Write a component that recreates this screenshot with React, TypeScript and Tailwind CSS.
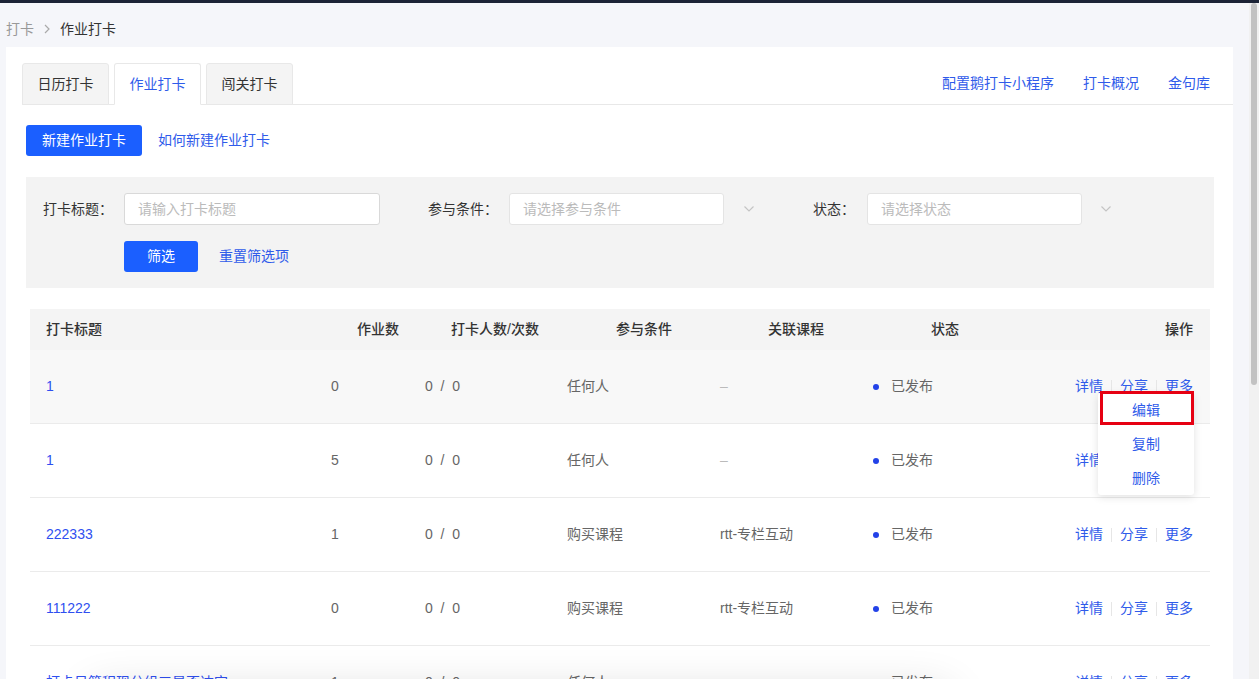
import React from "react";

const FONT = { fontFamily: '"Liberation Sans","Noto Sans CJK SC",sans-serif' };

const Chevron = ({ className = "" }: { className?: string }) => (
  <svg width="12" height="8" viewBox="0 0 12 8" className={className} fill="none">
    <path d="M1.5 1.5 L6 6 L10.5 1.5" stroke="#c4c4c4" strokeWidth="1.2" />
  </svg>
);

type Row = {
  title: string;
  n: string;
  course: string;
  cond: string;
  hover?: boolean;
  hideActions?: boolean;
};

const rows: Row[] = [
  { title: "1", n: "0", cond: "任何人", course: "–", hover: true },
  { title: "1", n: "5", cond: "任何人", course: "–", hideActions: true },
  { title: "222333", n: "1", cond: "购买课程", course: "rtt-专栏互动" },
  { title: "111222", n: "0", cond: "购买课程", course: "rtt-专栏互动" },
  { title: "打卡日简程现分组三是否达定", n: "1", cond: "任何人", course: "" },
];

function Actions({ partial }: { partial?: boolean }) {
  return (
    <div className="flex items-center justify-end pr-[17px] text-[#2f5bea]">
      <span>详情</span>
      <span className="mx-[8px] h-[14px] w-px bg-[#e6e6e6]" />
      <span className={partial ? "invisible" : ""}>分享</span>
      <span className="mx-[8px] h-[14px] w-px bg-[#e6e6e6]" />
      <span className={partial ? "invisible" : ""}>更多</span>
    </div>
  );
}

export default function App() {
  return (
    <div
      className="relative h-[679px] w-[1259px] overflow-hidden bg-[#f5f6fa] text-[14px] text-[#333]"
      style={FONT}
    >
      <div className="h-[3px] bg-[#1c2336]" />
      <div className="flex">
        <div className="w-[1249px]">
          {/* breadcrumb */}
          <div className="flex h-[44px] items-center pl-[6px] pt-[8px]">
            <span className="text-[#999]">打卡</span>
            <svg width="8" height="10" viewBox="0 0 8 10" className="mx-[9px]" fill="none">
              <path d="M2 1 L6 5 L2 9" stroke="#aaa" strokeWidth="1.2" />
            </svg>
            <span className="text-[#333]">作业打卡</span>
          </div>

          {/* card */}
          <div className="ml-[6px] mr-[16px] h-[700px] bg-white pt-[16px]">
            {/* tabs */}
            <div className="ml-[16px] flex h-[42px] items-end border-b border-[#e8e8e8]">
              <div className="mb-[-1px] flex h-[42px] w-[87px] items-center justify-center rounded-t-[3px] border border-[#e8e8e8] bg-[#f4f4f4] text-[#333]">
                日历打卡
              </div>
              <div className="mb-[-1px] ml-[5px] flex h-[42px] w-[87px] items-center justify-center rounded-t-[3px] border border-[#e8e8e8] border-b-white bg-white text-[#2f5bea]">
                作业打卡
              </div>
              <div className="mb-[-1px] ml-[5px] flex h-[42px] w-[87px] items-center justify-center rounded-t-[3px] border border-[#e8e8e8] bg-[#f4f4f4] text-[#333]">
                闯关打卡
              </div>
              <div className="ml-auto flex h-[41px] items-center gap-[29px] pr-[23px] text-[#2f5bea]">
                <span>配置鹅打卡小程序</span>
                <span>打卡概况</span>
                <span>金句库</span>
              </div>
            </div>

            {/* action buttons */}
            <div className="ml-[20px] mt-[20px] flex items-center">
              <button className="h-[31px] w-[116px] rounded-[3px] bg-[#1b5fff] text-white">新建作业打卡</button>
              <span className="ml-[16px] text-[#2f5bea]">如何新建作业打卡</span>
            </div>

            {/* filter panel */}
            <div className="ml-[20px] mt-[21px] h-[111px] w-[1188px] bg-[#f3f3f3] pl-[17px] pt-[16px]">
              <div className="flex h-[32px] items-center">
                <span className="w-[81px] text-[#333]">打卡标题：</span>
                <div className="flex h-[32px] w-[256px] items-center rounded-[3px] border border-[#d9d9d9] bg-white pl-[13px] text-[#bbb]">
                  请输入打卡标题
                </div>
                <span className="ml-[48px] w-[81px] text-[#333]">参与条件：</span>
                <div className="flex h-[32px] w-[215px] items-center rounded-[3px] border border-[#e4e4e4] bg-white pl-[13px] text-[#bbb]">
                  请选择参与条件
                </div>
                <Chevron className="ml-[19px]" />
                <span className="ml-[58px] w-[54px] text-[#333]">状态：</span>
                <div className="flex h-[32px] w-[215px] items-center rounded-[3px] border border-[#e4e4e4] bg-white pl-[13px] text-[#bbb]">
                  请选择状态
                </div>
                <Chevron className="ml-[18px]" />
              </div>
              <div className="ml-[81px] mt-[16px] flex items-center">
                <button className="h-[31px] w-[74px] rounded-[3px] bg-[#1b5fff] text-white">筛选</button>
                <span className="ml-[21px] text-[#2f5bea]">重置筛选项</span>
              </div>
            </div>

            {/* table */}
            <div className="relative ml-[24px] mt-[21px] w-[1180px]">
              <div className="flex h-[41px] items-center bg-[#f4f4f4] font-medium text-[#333]">
                <div className="w-[280px] pl-[16px]">打卡标题</div>
                <div className="w-[100px] pr-[11px] text-right">作业数</div>
                <div className="w-[145px] pl-[41px]">打卡人数/次数</div>
                <div className="w-[150px] pl-[61px]">参与条件</div>
                <div className="w-[155px] pl-[63px]">关联课程</div>
                <div className="w-[150px] pl-[71px]">状态</div>
                <div className="w-[200px] pr-[17px] text-right">操作</div>
              </div>
              {rows.map((r, i) => (
                <div
                  key={i}
                  className={`flex h-[74px] items-center border-b border-[#ebebeb] text-[#666] ${
                    r.hover ? "bg-[#f8f8f8]" : "bg-white"
                  }`}
                >
                  <div className="w-[280px] pl-[16px] text-[#2f4ff0]">{r.title}</div>
                  <div className="w-[100px] pl-[21px]">{r.n}</div>
                  <div className="w-[145px] whitespace-pre pl-[15px]">{"0  /  0"}</div>
                  <div className="w-[150px] pl-[12px]">{r.cond}</div>
                  <div className="w-[155px] pl-[15px]">
                    {r.course === "–" ? <span className="text-[#bbb]">–</span> : r.course}
                  </div>
                  <div className="flex w-[150px] items-center pl-[13px]">
                    <span className="h-[6px] w-[6px] rounded-full bg-[#2342e8]" />
                    <span className="ml-[12px]">已发布</span>
                  </div>
                  <div className="w-[200px]">
                    <Actions partial={r.hideActions} />
                  </div>
                </div>
              ))}

              {/* dropdown */}
              <div className="absolute left-[1068px] top-[84px] w-[96px] rounded-[3px] bg-white text-[#2f5bea] shadow-[0_2px_8px_rgba(0,0,0,0.12)]">
                <div className="flex h-[34px] items-center justify-center">编辑</div>
                <div className="flex h-[34px] items-center justify-center">复制</div>
                <div className="flex h-[34px] items-center justify-center">删除</div>
              </div>
              <div className="absolute left-[1070px] top-[82px] h-[34px] w-[94px] border-[3px] border-[#e60012]" />
            </div>
          </div>
        </div>

        {/* scrollbar */}
        <div className="h-[676px] w-[10px] bg-[#f1f1f1] pl-[2px]">
          <div className="h-[382px] w-[6px] rounded-full bg-[#c2c2c2]" />
        </div>
      </div>

      {/* faint shadow of a floating element below the fold */}
      <div className="absolute left-[90px] top-[692px] h-[60px] w-[860px] rounded-[12px] bg-white/0 shadow-[0_0_45px_rgba(0,0,0,0.16)]" />
    </div>
  );
}
